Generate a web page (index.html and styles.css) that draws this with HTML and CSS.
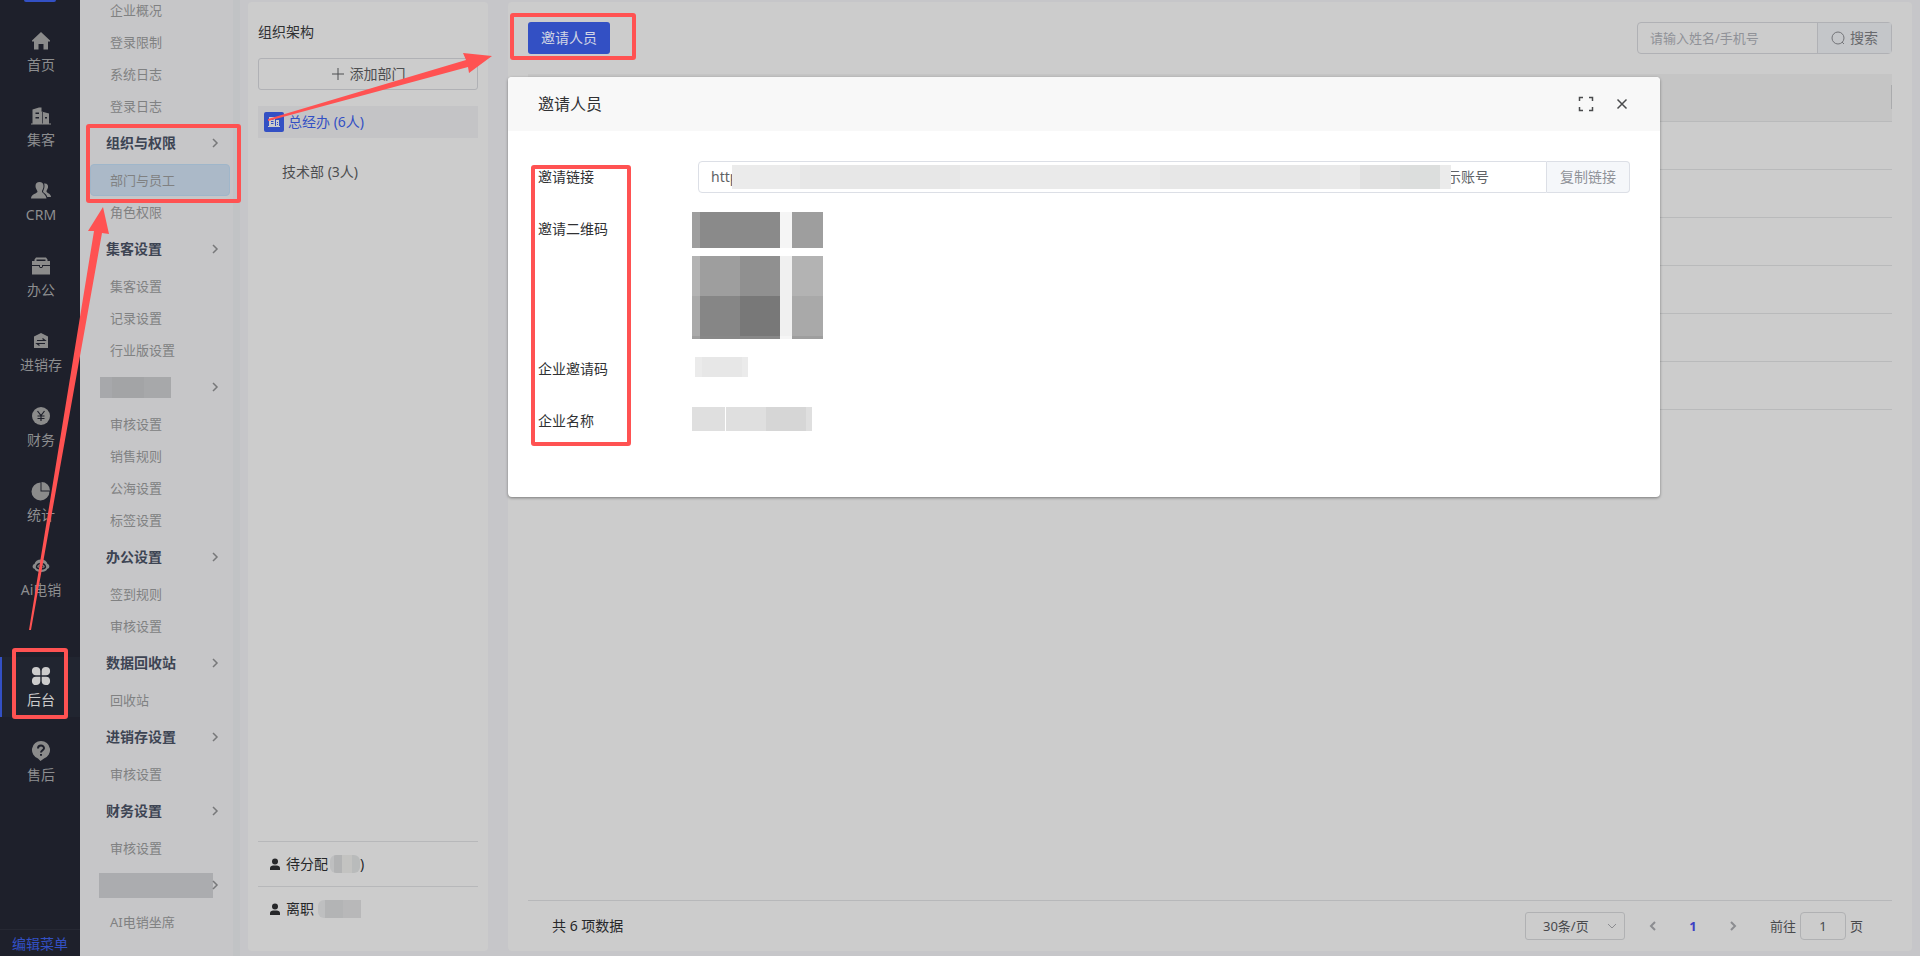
FILE: index.html
```html
<!DOCTYPE html>
<html lang="zh-CN">

<head>
    <meta charset="UTF-8">
    <meta name="viewport" content="width=device-width, initial-scale=1.0">
    <title>部门与员工</title>
    <link rel="stylesheet" href="styles.css">
</head>

<body>
    <div class="app">
        <nav class="rail">
            <div class="logo"></div>
            <a class="rail-item" href="#">
                <svg viewBox="0 0 20 20"><path d="M10 1 19 9.500V10.500H17V18.500H12.500V13H7.500V18.500H3V10.500H1V9.500Z" /></svg>
                首页
            </a>
            <a class="rail-item" href="#">
                <svg viewBox="0 0 20 20"><path fill-rule="evenodd" d="M0 17.500H1.500V3.500L8 1.500H10.500V5.500L18 7.500V17.500H20V18.500H0ZM4.500 6.500V8H8V6.500ZM4.500 11V12.500H8V11ZM11 6V17.500H11.700V6ZM14 11V12.500H16V11Z" /></svg>
                集客
            </a>
            <a class="rail-item" href="#">
                <svg viewBox="0 0 20 20"><path d="M8.500 1C11 1 12.500 2.500 12.500 5C12.500 7.500 11.500 8.500 11 10C10.500 12 15 13 15.500 17.500H0C0 13 6.500 12.500 6.500 10.500C6 8.500 4.500 7.500 4.500 5C4.500 2.500 6 1 8.500 1Z" /><path d="M13 2.500C16 2 17.500 4 17 6.500C16.500 8.500 15.500 9 15.500 10.500C15.500 12 20 12.500 20 16H16.300C15.500 13 13 12 12 11C12 9.500 13.500 8 13.500 5C13.500 4 13.300 3 13 2.500Z" /></svg>
                CRM
            </a>
            <a class="rail-item" href="#">
                <svg viewBox="0 0 20 20"><path fill-rule="evenodd" d="M5 1.500H15L16.500 3.500V5H19V9H1V5H3.500V3.500ZM5.500 3.500V5H14.500V3.500ZM1 10H8C8 12.700 12 12.700 12 10H19V18.500H1ZM9 9H11V11H9Z" /></svg>
                办公
            </a>
            <a class="rail-item" href="#">
                <svg viewBox="0 0 20 20"><path d="M10 2 17 5.500V17H3V5.500Z" /><path class="cut thin" d="M6 9.500H14L11.500 7.500M14 12.500H6L8.500 14.500" /></svg>
                进销存
            </a>
            <a class="rail-item" href="#">
                <svg viewBox="0 0 20 20"><circle cx="10" cy="10" r="9" /><path class="cut thin" d="M6.500 5 10 9.500 13.500 5M10 9.500V15M6.500 10H13.500M6.500 12.500H13.500" /></svg>
                财务
            </a>
            <a class="rail-item" href="#">
                <svg viewBox="0 0 20 20"><path d="M9.500 1.500V10.500H18.500A9 9 0 1 1 9.500 1.500ZM10.500 1A8.500 8.500 0 0 1 19 9.500H10.500Z" /></svg>
                统计
            </a>
            <a class="rail-item" href="#">
                <svg viewBox="0 0 20 20"><path d="M10 3.500C13.500 3.500 16 5.500 16.500 8C19 8.500 19 12.500 16.500 12.800C15.500 15.200 13 16 10 16C7 16 4.500 15.200 3.500 12.800C1 12.500 1 8.500 3.500 8C4 5.500 6.500 3.500 10 3.500Z" /><path class="cut" d="M5.500 11C6 8 8 7.500 10 7.500S14 8 14.500 11C14 13.500 6 13.500 5.500 11ZM8.500 9.500V11.500M11.500 9.500V11.500" /></svg>
                Ai电销
            </a>
            <a class="rail-item admin active" href="#">
                <svg viewBox="0 0 20 20"><path d="M9.300 9.300H5A4.200 4.200 0 1 1 9.300 5ZM10.700 9.300V5A4.200 4.200 0 1 1 15 9.300ZM9.300 10.700V15A4.200 4.200 0 1 1 5 10.700ZM10.700 10.700H15A4.200 4.200 0 1 1 10.700 15Z" /></svg>
                后台
            </a>
            <a class="rail-item" href="#">
                <svg viewBox="0 0 20 20"><path d="M10 0A9 9 0 0 1 13 17.500L9.500 20 7 17.500A9 9 0 0 1 10 0Z" /><path class="cut bold" d="M7 7.500C7 3.500 13 3.500 13 7.300C13 9 10 9.500 10 11.500M10 13V14.800" /></svg>
                售后
            </a>
            <a class="edit-menu" href="#">编辑菜单</a>
        </nav>

        <nav class="submenu">
            <a class="sub-item" href="#">企业概况</a>
            <a class="sub-item" href="#">登录限制</a>
            <a class="sub-item" href="#">系统日志</a>
            <a class="sub-item" href="#">登录日志</a>
            <button class="sub-title">组织与权限<svg viewBox="0 0 10 10"><path d="M3 1 7 5 3 9" /></svg></button>
            <a class="sub-item current" href="#">部门与员工</a>
            <a class="sub-item" href="#">角色权限</a>
            <button class="sub-title">集客设置<svg viewBox="0 0 10 10"><path d="M3 1 7 5 3 9" /></svg></button>
            <a class="sub-item" href="#">集客设置</a>
            <a class="sub-item" href="#">记录设置</a>
            <a class="sub-item" href="#">行业版设置</a>
            <button class="sub-title" aria-label="设置"><span class="mask mask-title"></span><svg viewBox="0 0 10 10"><path d="M3 1 7 5 3 9" /></svg></button>
            <a class="sub-item" href="#">审核设置</a>
            <a class="sub-item" href="#">销售规则</a>
            <a class="sub-item" href="#">公海设置</a>
            <a class="sub-item" href="#">标签设置</a>
            <button class="sub-title">办公设置<svg viewBox="0 0 10 10"><path d="M3 1 7 5 3 9" /></svg></button>
            <a class="sub-item" href="#">签到规则</a>
            <a class="sub-item" href="#">审核设置</a>
            <button class="sub-title">数据回收站<svg viewBox="0 0 10 10"><path d="M3 1 7 5 3 9" /></svg></button>
            <a class="sub-item" href="#">回收站</a>
            <button class="sub-title">进销存设置<svg viewBox="0 0 10 10"><path d="M3 1 7 5 3 9" /></svg></button>
            <a class="sub-item" href="#">审核设置</a>
            <button class="sub-title">财务设置<svg viewBox="0 0 10 10"><path d="M3 1 7 5 3 9" /></svg></button>
            <a class="sub-item" href="#">审核设置</a>
            <button class="sub-title" aria-label="设置"><span class="mask mask-wide"></span><svg viewBox="0 0 10 10"><path d="M3 1 7 5 3 9" /></svg></button>
            <a class="sub-item" href="#">AI电销坐席</a>
        </nav>

        <aside class="panel org">
            <h2>组织架构</h2>
            <button class="add-dept"><svg viewBox="0 0 14 14"><path d="M7 1V13M1 7H13" /></svg>添加部门</button>
            <a class="dept selected" href="#">
                <svg viewBox="0 0 20 20"><rect width="20" height="20" rx="2" /><path d="M4 14H5V5H11V14H12V8H15V14H16V15H4Z" /><path class="windows" d="M7 7.500H9.500M7 9.500H9.500M7 11.500H9.500M13 10.500H14M13 12.500H14" /></svg>
                总经办 (6人)
            </a>
            <a class="dept child" href="#">技术部 (3人)</a>
            <div class="org-foot">
                <a class="foot-item" href="#">
                    <svg viewBox="0 0 12 12"><circle cx="6" cy="3.500" r="3" /><path d="M1 12V10C1 8 3 7.500 6 7.500S11 8 11 10V12Z" /></svg>
                    待分配<span class="mask mask-count"></span>)
                </a>
                <a class="foot-item" href="#">
                    <svg viewBox="0 0 12 12"><circle cx="6" cy="3.500" r="3" /><path d="M1 12V10C1 8 3 7.500 6 7.500S11 8 11 10V12Z" /></svg>
                    离职<span class="mask mask-left"></span>
                </a>
            </div>
        </aside>

        <main class="panel content">
            <div class="toolbar">
                <button class="invite">邀请人员</button>
                <form class="search">
                    <input type="text" placeholder="请输入姓名/手机号" aria-label="姓名/手机号">
                    <button type="button"><svg viewBox="0 0 14 14"><circle cx="7" cy="7" r="6" /><path d="M11 11 13 13" /></svg>搜索</button>
                </form>
            </div>

            <table class="staff">
                <thead>
                    <tr><th><span class="resizer"></span></th></tr>
                </thead>
                <tbody>
                    <tr><td></td></tr>
                    <tr><td></td></tr>
                    <tr><td></td></tr>
                    <tr><td></td></tr>
                    <tr><td></td></tr>
                    <tr><td></td></tr>
                </tbody>
            </table>

            <div class="pager">
                <span>共 6 项数据</span>
                <div class="page-tools">
                    <div class="page-size">
                        <select aria-label="每页条数">
                            <option>30条/页</option>
                        </select>
                        <svg viewBox="0 0 10 10"><path d="M1 3 5 7 9 3" /></svg>
                    </div>
                    <button class="page-btn" aria-label="上一页"><svg viewBox="0 0 10 10"><path d="M7 1 3 5 7 9" /></svg></button>
                    <button class="page-btn on">1</button>
                    <button class="page-btn" aria-label="下一页"><svg viewBox="0 0 10 10"><path d="M3 1 7 5 3 9" /></svg></button>
                    <label class="jump">前往<input type="text" value="1">页</label>
                </div>
            </div>

            <section class="dialog" role="dialog" aria-labelledby="dialog-title">
                <header>
                    <h3 id="dialog-title">邀请人员</h3>
                    <button aria-label="全屏"><svg viewBox="0 0 16 16"><path d="M1.500 5V1.500H5M11 1.500H14.500V5M14.500 11V14.500H11M5 14.500H1.500V11" /></svg></button>
                    <button aria-label="关闭"><svg viewBox="0 0 16 16"><path d="M3.500 3.500 12.500 12.500M12.500 3.500 3.500 12.500" /></svg></button>
                </header>
                <div class="dialog-body">
                    <div class="field">
                        <label for="link">邀请链接</label>
                        <div class="link-box">
                            <input id="link" type="text" value="http" readonly>
                            <span class="mask mask-link"></span>
                            <span class="link-end">示账号</span>
                        </div>
                        <button class="copy">复制链接</button>
                    </div>
                    <div class="field">
                        <span class="name">邀请二维码</span>
                        <div class="qr">
                            <svg viewBox="0 0 131 127" shape-rendering="crispEdges">
                                <path fill="#9e9e9e" d="M0 0H8V36H0ZM100 0H131V36H100ZM8 44H48V84H8Z" />
                                <path fill="#8a8a8a" d="M8 0H88V36H8Z" />
                                <path fill="#f5f5f5" d="M88 0H100V36H88ZM88 124H100V127H88Z" />
                                <path fill="#b3b3b3" d="M0 44H8V84H0ZM100 44H131V84H100Z" />
                                <path fill="#909090" d="M48 44H88V84H48Z" />
                                <path fill="#f0f0f0" d="M88 44H100V124H88Z" />
                                <path fill="#a9a9a9" d="M0 84H8V124H0ZM100 84H131V124H100Z" />
                                <path fill="#868686" d="M8 84H48V124H8Z" />
                                <path fill="#787878" d="M48 84H88V124H48Z" />
                                <path fill="#9e9e9e" d="M0 124H8V127H0ZM100 124H131V127H100Z" />
                                <path fill="#888888" d="M8 124H88V127H8Z" />
                            </svg>
                        </div>
                    </div>
                    <div class="field">
                        <span class="name">企业邀请码</span>
                        <span class="mask mask-code"></span>
                    </div>
                    <div class="field">
                        <span class="name">企业名称</span>
                        <span class="mask mask-company"></span>
                    </div>
                </div>
            </section>
        </main>

        <!-- guide marks over the page -->
        <svg class="guide" viewBox="0 0 1920 956">
            <rect x="88" y="126" width="151" height="75" rx="1" />
            <rect x="512" y="15" width="122" height="43" rx="1" />
            <rect x="533" y="167" width="96" height="277" rx="1" />
            <rect x="14" y="650" width="52" height="67" rx="1" />
            <path d="M29 630 94 231 88 231 103 207 109 234 102 233 31 630Z" />
            <path d="M268 119 466 60 463 53 492 56 469 73 468 67 268 121Z" />
        </svg>
    </div>
</body>

</html>
```

FILE: styles.css
```css
* {
    margin: 0;
    padding: 0;
    box-sizing: border-box;
}

body {
    font-family: "Noto Sans", "Noto Sans CJK SC", sans-serif;
    font-size: 14px;
    line-height: 20px;
    color: #303133;
    background-color: #c6c6c9;
}

a {
    color: inherit;
    text-decoration: none;
}

button,
input,
select {
    font: inherit;
    color: inherit;
    background: none;
    border: none;
    outline: none;
}

svg {
    flex: none;
}

.app {
    position: relative;
    display: flex;
    height: 100vh;
    overflow: hidden;
}

/* left rail */
.rail {
    display: flex;
    flex-direction: column;
    gap: 15px;
    width: 80px;
    background-color: #1e202b;
    color: #8d8e90;
}

.logo {
    flex: none;
    width: 32px;
    height: 2px;
    margin: 0 auto 5px;
    border-radius: 0 0 4px 4px;
    background-color: #3350c4;
}

.rail-item {
    display: flex;
    flex-direction: column;
    align-items: center;
    gap: 4px;
    height: 60px;
    padding: 9px 0 0 2px;
}

.rail-item svg {
    width: 20px;
    height: 20px;
    fill: #8b8b8b;
}

.rail-item .cut {
    fill: none;
    stroke: #1e202b;
    stroke-width: 1.5;
}

.rail-item .thin {
    stroke-width: 1.2;
}

.rail-item .bold {
    stroke-width: 2;
}

.rail-item.admin {
    margin-top: 35px;
}

.rail-item.active {
    padding-left: 0;
    border-left: 2px solid #3350c4;
    background-color: #212530;
    color: #cccccc;
}

.rail-item.active svg {
    fill: #cccccc;
}

.edit-menu {
    height: 27px;
    margin-top: auto;
    padding-top: 4px;
    border-top: 1px solid #262833;
    text-align: center;
    color: #3350c4;
}

/* second level menu */
.submenu {
    display: flex;
    flex-direction: column;
    justify-content: flex-end;
    width: 160px;
    padding: 0 10px 18px;
    border-right: 7px solid #c1c3c5;
    background-color: #c6c6c8;
}

.sub-item {
    flex: none;
    height: 32px;
    width: 140px;
    padding-left: 20px;
    font-size: 13px;
    line-height: 32px;
    color: #808182;
}

.sub-item.current {
    padding-left: 19px;
    border: 1px solid #9fb6ca;
    border-radius: 4px;
    background-color: #abb9c8;
    line-height: 30px;
}

.sub-title {
    flex: none;
    display: flex;
    align-items: center;
    justify-content: space-between;
    height: 42px;
    width: 140px;
    padding: 0 10px 0 16px;
    font-weight: bold;
    color: #3d4453;
}

.sub-title svg {
    width: 10px;
    height: 10px;
    fill: none;
    stroke: #77787a;
    stroke-width: 1.5;
}

.mask {
    flex: none;
    display: block;
}

.mask-title {
    width: 71px;
    height: 21px;
    margin-left: -6px;
    background: linear-gradient(to right, #a7a8ab 12px, #a3a4a6 12px 44px, #a7a8aa 44px);
}

.mask-wide {
    width: 114px;
    height: 25px;
    margin: 0 -10px 0 -7px;
    background-color: #abacaf;
}

/* panels */
.panel {
    margin: 2px 0 5px;
    border-radius: 4px;
    background-color: #cccccc;
}

.org {
    display: flex;
    flex-direction: column;
    width: 240px;
    margin-left: 8px;
    padding: 20px 10px;
}

.org h2 {
    font-size: 14px;
    font-weight: normal;
}

.add-dept {
    display: flex;
    align-items: center;
    justify-content: center;
    gap: 5px;
    height: 32px;
    margin: 16px 0;
    border: 1px solid #b0b1b5;
    border-radius: 3px;
    color: #4d4e50;
}

.add-dept svg {
    width: 14px;
    height: 14px;
    stroke: #4d4e50;
}

.dept {
    display: flex;
    align-items: center;
    gap: 4px;
    height: 32px;
    padding-left: 6px;
    color: #4d4e50;
}

.dept.selected {
    margin-bottom: 18px;
    background-color: #c4c4c6;
    color: #3350c4;
}

.dept.child {
    padding-left: 24px;
}

.dept svg {
    width: 20px;
    height: 20px;
    fill: #cccccc;
}

.dept rect {
    fill: #3350c4;
}

.dept .windows {
    stroke: #3350c4;
}

.org-foot {
    margin-top: auto;
}

.foot-item {
    display: flex;
    align-items: center;
    height: 45px;
    padding-left: 11px;
    border-top: 1px solid #b7b8ba;
    color: #262729;
}

.foot-item svg {
    width: 12px;
    height: 12px;
    margin-right: 5px;
    fill: #262729;
}

.mask-count {
    width: 30px;
    height: 18px;
    margin-left: 2px;
    border-radius: 6px;
    background: linear-gradient(to right, #bebfc0 4px, #b2b3b4 4px 12px, #c3c3c1 12px 22px, #b9bbbb 22px);
}

.mask-left {
    width: 43px;
    height: 18px;
    margin-left: 4px;
    border-radius: 6px 0 0 6px;
    background: linear-gradient(to right, #bebfc0 7px, #b3b4b5 7px 25px, #b8b8b9 25px);
}

/* content */
.content {
    position: relative;
    flex: 1;
    display: flex;
    flex-direction: column;
    margin-left: 20px;
    margin-right: 8px;
    padding: 20px 20px 0;
}

.toolbar {
    display: flex;
    justify-content: space-between;
    margin-bottom: 20px;
}

.invite {
    width: 82px;
    height: 32px;
    border-radius: 3px;
    background-color: #3350c4;
    color: #d2d6e4;
}

.search {
    display: flex;
    height: 32px;
    border: 1px solid #b0b1b5;
    border-radius: 4px;
}

.search input {
    width: 180px;
    padding-left: 12px;
    border-right: 1px solid #b0b1b5;
    font-size: 13px;
}

.search input::placeholder {
    color: #909298;
}

.search button {
    display: flex;
    align-items: center;
    gap: 5px;
    padding: 0 13px;
    background-color: #c4c6c9;
    color: #68696d;
}

.search svg {
    width: 14px;
    height: 14px;
    fill: none;
    stroke: #737478;
}

.staff {
    width: 100%;
    border-collapse: collapse;
}

.staff th,
.staff td {
    height: 48px;
    border-bottom: 1px solid #b9babb;
}

.staff th {
    height: 47px;
    background-color: #c5c5c5;
}

.resizer {
    display: block;
    width: 1px;
    height: 24px;
    margin-left: auto;
    background-color: #aaabad;
}

.pager {
    display: flex;
    align-items: center;
    justify-content: space-between;
    height: 51px;
    margin-top: auto;
    padding: 0 29px 0 24px;
    border-top: 1px solid #b7b8ba;
    color: #262729;
}

.page-tools {
    display: flex;
    align-items: center;
    font-size: 13px;
    color: #48494c;
}

.page-size {
    display: grid;
    align-items: center;
    margin-right: 8px;
}

.page-size select,
.page-size svg {
    grid-area: 1 / 1;
}

.page-size select {
    width: 100px;
    height: 28px;
    padding-left: 17px;
    border: 1px solid #b0b1b3;
    border-radius: 3px;
    appearance: none;
}

.page-size svg {
    justify-self: end;
    margin-right: 8px;
}

.page-tools svg {
    width: 10px;
    height: 10px;
    fill: none;
    stroke: #8b8c90;
}

.page-btn {
    width: 40px;
    height: 28px;
}

.page-btn svg {
    stroke-width: 2;
}

.page-btn.on {
    font-weight: bold;
    color: #3d3fc4;
}

.jump {
    display: flex;
    align-items: center;
    gap: 4px;
    margin-left: 17px;
}

.jump input {
    width: 46px;
    height: 28px;
    border: 1px solid #b0b1b3;
    border-radius: 4px;
    text-align: center;
}

/* invite dialog */
.dialog {
    position: absolute;
    top: 75px;
    left: 0;
    width: 60vw;
    border-radius: 4px;
    background-color: #ffffff;
    box-shadow: 0 1px 3px rgba(0, 0, 0, 0.4);
}

.dialog header {
    display: flex;
    align-items: center;
    gap: 20px;
    height: 54px;
    padding: 0 30px;
    border-radius: 4px 4px 0 0;
    background-color: #f8f8f8;
}

.dialog h3 {
    margin-right: auto;
    font-size: 16px;
    font-weight: normal;
}

.dialog header svg {
    display: block;
    width: 16px;
    height: 16px;
    fill: none;
    stroke: #4a4b4d;
    stroke-width: 1.5;
}

.dialog-body {
    display: flex;
    flex-direction: column;
    gap: 20px;
    padding: 30px 30px 60px;
}

.field {
    display: flex;
    min-height: 32px;
}

.field label,
.field .name {
    width: 160px;
    line-height: 32px;
}

.link-box {
    flex: 1;
    display: flex;
    align-items: center;
    height: 32px;
    padding: 0 57px 0 12px;
    border: 1px solid #dcdfe6;
    border-radius: 4px 0 0 4px;
    color: #606266;
}

.link-box input {
    width: 21px;
}

.mask-link {
    position: relative;
    flex: 1;
    height: 24px;
    background: linear-gradient(to left, #ebebeb 11px, #dcdedd 11px 51px, #e1e1e1 51px 91px, #e9e9e9 91px 131px, #e7e7e7 131px 291px, #eaeaea 291px 491px, #e7e7e7 491px 651px, #ebebeb 651px);
}

.link-end {
    margin-left: -4px;
}

.copy {
    width: 83px;
    height: 32px;
    border: 1px solid #dcdfe6;
    border-left: none;
    border-radius: 0 4px 4px 0;
    background-color: #f5f7fa;
    color: #909399;
}

.qr {
    position: relative;
    width: 120px;
    height: 120px;
}

.qr svg {
    position: absolute;
    top: -1px;
    left: -6px;
    width: 131px;
    height: 127px;
}

.mask-code {
    width: 53px;
    height: 20px;
    margin: 4px 0 0 -3px;
    background: linear-gradient(to right, #ebebeb 7px, #e7e7e7 7px 47px, #ebebeb 47px);
}

.mask-company {
    width: 120px;
    height: 24px;
    margin: 2px 0 0 -6px;
    background: linear-gradient(to right, #dfdfdf 33px, #ffffff 33px 34px, #dfdfdf 34px 74px, #d6d6d6 74px 114px, #dfdfdf 114px);
}

/* guide marks */
.guide {
    position: absolute;
    top: 0;
    left: 0;
    width: 1920px;
    height: 956px;
    pointer-events: none;
}

.guide rect {
    fill: none;
    stroke: #ff5252;
    stroke-width: 4;
}

.guide path {
    fill: #ff5252;
}
```
